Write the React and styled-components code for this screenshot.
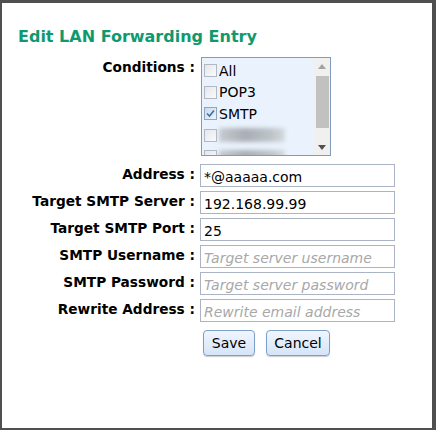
import React from 'react';
import styled, { createGlobalStyle } from 'styled-components';

const GlobalStyle = createGlobalStyle`
  html, body {
    margin: 0;
    padding: 0;
    background: #505050;
  }
  body {
    font-family: "DejaVu Sans", Verdana, sans-serif;
  }
`;

const Frame = styled.div`
  width: 436px;
  height: 430px;
  box-sizing: border-box;
  padding: 3px 4px 2px 2px;
`;

const Panel = styled.div`
  background: #fff;
  height: 100%;
  box-sizing: border-box;
  padding-top: 25px;
`;

const Title = styled.h2`
  margin: 0 0 11px 16px;
  font-size: 16px;
  font-weight: bold;
  color: #10996e;
  line-height: 18px;
`;

const Form = styled.div`
  display: grid;
  grid-template-columns: 193px 195px;
  column-gap: 5px;
  row-gap: 4px;
  align-items: start;
`;

const Label = styled.label`
  text-align: right;
  font-size: 13.7px;
  font-weight: bold;
  color: #000;
  line-height: 16px;
  padding-top: 2px;
  white-space: nowrap;
`;

const ListBox = styled.div`
  width: 130px;
  height: 99px;
  box-sizing: border-box;
  margin-left: 1px;
  margin-bottom: 4px;
  border: 1px solid #7f9db9;
  background: #eaf3fd;
  display: flex;
  overflow: hidden;
`;

const Options = styled.div`
  flex: 1;
  padding-top: 2px;
  overflow: hidden;
`;

const Option = styled.div`
  display: flex;
  align-items: center;
  height: 21.5px;
  font-size: 14px;
  color: #000;
  padding-left: 2px;
`;

const Box = styled.span`
  width: 13px;
  height: 13px;
  box-sizing: border-box;
  border: 1px solid #b0b9c4;
  background: linear-gradient(135deg, #e4e6ea, #fbfbfc);
  margin-right: 2px;
  display: flex;
  align-items: center;
  justify-content: center;
  flex-shrink: 0;
  ${p => p.$checked && `
    border-color: #8ea6c1;
    background: linear-gradient(135deg, #c9daee, #eef4fb);
  `}
`;

const Blurred = styled.span`
  width: 66px;
  height: 14px;
  background: linear-gradient(90deg, #c6cbd1, #a9aeb4 40%, #bfc4ca 80%, #d6dade);
  filter: blur(2px);
`;

const ScrollBar = styled.div`
  width: 16px;
  background: #f0f0f0;
  display: flex;
  flex-direction: column;
  align-items: center;
`;

const Arrow = styled.div`
  height: 16px;
  display: flex;
  align-items: center;
  justify-content: center;
`;

const Thumb = styled.div`
  width: 13px;
  height: 52px;
  background: #c1c1c1;
  margin-top: 2px;
`;

const Spacer = styled.div`
  flex: 1;
`;

const Input = styled.input`
  width: 195px;
  height: 23px;
  box-sizing: border-box;
  border: 1px solid #abb4c4;
  padding: 2px 3px 0;
  font-family: "DejaVu Sans", Verdana, sans-serif;
  font-size: 14px;
  color: #000;
  background: #fff;
  outline: none;
  &::placeholder {
    color: #a8a8a8;
    font-style: italic;
  }
`;

const Buttons = styled.div`
  grid-column: 2;
  display: flex;
  gap: 11px;
  padding-left: 3px;
  margin-top: 4px;
`;

const Button = styled.button`
  width: ${p => p.$w}px;
  height: 26px;
  padding: 0;
  border: 1px solid #7d9fc9;
  border-radius: 4px;
  background: linear-gradient(#f0f6fe, #d4e5f8);
  box-shadow: 0 1px 1px rgba(0, 0, 0, 0.2);
  font-family: "DejaVu Sans", Verdana, sans-serif;
  font-size: 14px;
  color: #000;
`;

const Check = () => (
  <svg width="9" height="9" viewBox="0 0 9 9">
    <path d="M1 4.5 L3.5 7 L8 1.5" fill="none" stroke="#3d6fa6" strokeWidth="1.6" />
  </svg>
);

const Tri = ({ up }) => (
  <svg width="8" height="5" viewBox="0 0 8 5">
    <path d={up ? 'M0 5 L4 0 L8 5 Z' : 'M0 0 L4 5 L8 0 Z'} fill={up ? '#a3a3a3' : '#505050'} />
  </svg>
);

const options = [
  { name: 'All' },
  { name: 'POP3' },
  { name: 'SMTP', checked: true },
  { blur: true },
  { blur: true },
];

const fields = [
  { label: 'Address :', value: '*@aaaaa.com' },
  { label: 'Target SMTP Server :', value: '192.168.99.99' },
  { label: 'Target SMTP Port :', value: '25' },
  { label: 'SMTP Username :', placeholder: 'Target server username' },
  { label: 'SMTP Password :', placeholder: 'Target server password' },
  { label: 'Rewrite Address :', placeholder: 'Rewrite email address' },
];

export default function App() {
  return (
    <>
      <GlobalStyle />
      <Frame>
        <Panel>
          <Title>Edit LAN Forwarding Entry</Title>
          <Form>
            <Label>Conditions :</Label>
            <ListBox>
              <Options>
                {options.map((o, i) => (
                  <Option key={i}>
                    <Box $checked={o.checked}>{o.checked && <Check />}</Box>
                    {o.blur ? <Blurred /> : o.name}
                  </Option>
                ))}
              </Options>
              <ScrollBar>
                <Arrow><Tri up /></Arrow>
                <Thumb />
                <Spacer />
                <Arrow><Tri /></Arrow>
              </ScrollBar>
            </ListBox>
            {fields.map(f => (
              <React.Fragment key={f.label}>
                <Label>{f.label}</Label>
                <Input defaultValue={f.value} placeholder={f.placeholder} />
              </React.Fragment>
            ))}
            <Buttons>
              <Button $w={52}>Save</Button>
              <Button $w={64}>Cancel</Button>
            </Buttons>
          </Form>
        </Panel>
      </Frame>
    </>
  );
}
